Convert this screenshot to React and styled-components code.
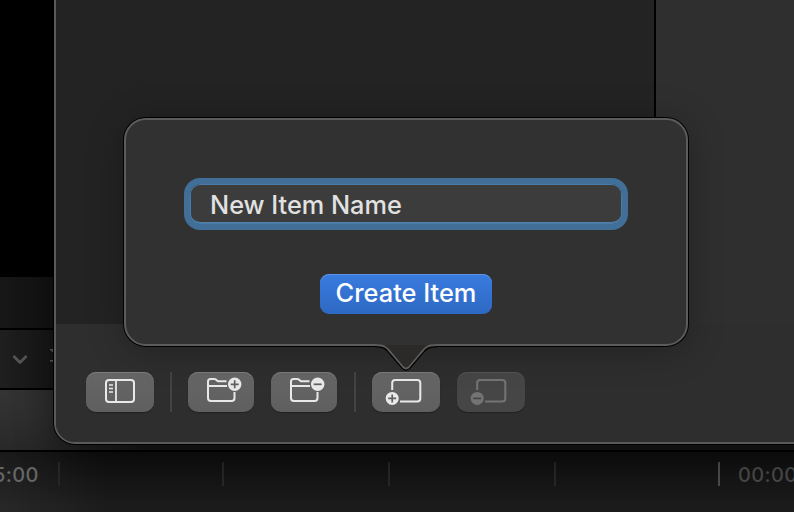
import React from "react";
import styled, { createGlobalStyle } from "styled-components";

const GlobalStyle = createGlobalStyle`
  *, *::before, *::after { box-sizing: border-box; }
  body { margin: 0; background: #000; }
`;

const Desktop = styled.main`
  position: relative;
  display: flex;
  flex-direction: column;
  width: 794px;
  height: 512px;
  overflow: hidden;
  background: #000;
  font-family: Inter, "Liberation Sans", sans-serif;
`;

const Viewer = styled.section`
  height: 277px;
  background: #000;
`;

const ViewerFooter = styled.div`
  height: 51px;
  background: linear-gradient(90deg, #171717, #111 54px);
`;

const TimelineHeader = styled.div`
  display: flex;
  align-items: center;
  gap: 21px;
  height: 62px;
  padding-left: 12px;
  border: solid #000;
  border-width: 2px 0;
  background: linear-gradient(90deg, #1f1f1f, #151515 54px);
`;

const TimelineBand = styled.div`
  height: 60px;
  background: radial-gradient(ellipse 160px 130px at 0 0, #343434, #2d2d2d 30%, #171717);
`;

const Ruler = styled.div`
  position: relative;
  height: 62px;
  border-top: 2px solid #000;
  background: linear-gradient(180deg, #0e0e0e, #1b1b1b 52px, #1c1c1c);

  &::before {
    content: "";
    position: absolute;
    inset: 0;
    background: linear-gradient(90deg, rgba(255, 255, 255, 0.05), transparent 110px);
  }
`;

const Tick = styled.span`
  position: absolute;
  left: ${(p) => p.$x}px;
  top: 10px;
  width: 2px;
  height: 24px;
  background: ${(p) => (p.$major ? "#4b4b4b" : "#272727")};
`;

const Timecode = styled.span`
  position: absolute;
  left: ${(p) => p.$x}px;
  top: 11px;
  color: ${(p) => p.$color};
  font-size: 20px;
  line-height: 24px;
  font-weight: 500;
  letter-spacing: 0.35px;
  white-space: nowrap;
`;

const Window = styled.section`
  position: absolute;
  left: 54px;
  top: -40px;
  display: flex;
  flex-direction: column;
  width: 800px;
  height: 484px;
  border: 2px solid #5a5a5a;
  border-radius: 21px;
  background: #2e2e2e;
  box-shadow: 0 0 0 1px #000, 0 12px 38px rgba(0, 0, 0, 0.35);
  overflow: hidden;
`;

const Panes = styled.div`
  display: flex;
  height: 362px;
`;

const ListPane = styled.div`
  width: 600px;
  background: #232323;
  border-right: 2px solid #000;
`;

const DetailPane = styled.div`
  flex: 1;
  background: #2f2f2f;
`;

const Toolbar = styled.div`
  display: flex;
  align-items: flex-start;
  flex: 1;
  padding: 48px 0 0 30px;
  background: #2e2e2e;
`;

const ToolButton = styled.button`
  display: flex;
  width: ${(p) => p.$w}px;
  height: 40px;
  margin: 0 ${(p) => p.$gap}px 0 0;
  padding: 0;
  border: 0;
  border-radius: 10px;
  background: ${(p) => (p.disabled ? "#464646" : "linear-gradient(#666, #5f5f5f)")};
  box-shadow:
    inset 0 1px 0 ${(p) => (p.disabled ? "#545454" : "#7c7c7c")},
    0 1px 1px rgba(0, 0, 0, 0.3);
  color: ${(p) => (p.disabled ? "#747474" : "#e9e9e9")};

  svg { display: block; }
`;

const Separator = styled.span`
  width: 2px;
  height: 40px;
  margin-right: 16px;
  background: #434343;
`;

const Popover = styled.form`
  position: absolute;
  left: 124px;
  top: 118px;
  display: flex;
  flex-direction: column;
  align-items: center;
  width: 564px;
  height: 228px;
  padding-top: 58px;
  border: 2px solid #5c5c5c;
  border-radius: 22px;
  background: #313131;
  box-shadow: 0 0 0 1px #000, 0 4px 36px rgba(0, 0, 0, 0.28);
`;

const Pointer = styled.svg`
  position: absolute;
  left: 246px;
  top: 222px;
`;

const NameField = styled.label`
  display: flex;
  align-items: center;
  width: 444px;
  height: 52px;
  padding-left: 20px;
  border: 6px solid #416f98;
  border-radius: 16px;
  background: #3c3c3c;
  box-shadow: inset 0 0 0 1px #487ba8, inset 0 -2px 0 #5080ab;
  color: #e1e1e1;
  font-size: 25.3px;
  font-weight: 450;
  line-height: 40px;
  white-space: nowrap;
`;

const FieldText = styled.span`
  margin-top: 1px;
`;

const CreateButton = styled.button`
  display: flex;
  align-items: center;
  justify-content: center;
  width: 172px;
  height: 40px;
  margin-top: 44px;
  padding: 0 0 2px;
  border: 0;
  border-radius: 9px;
  background: linear-gradient(#397bdf, #2e69c3);
  box-shadow: inset 0 1px 0 #5d94e6;
  color: #fff;
  font: 500 25.4px/38px Inter, "Liberation Sans", sans-serif;
  white-space: nowrap;
`;

const SidebarIcon = () => (
  <svg width="68" height="40" fill="none" stroke="currentColor">
    <rect x="20" y="8" width="28" height="22" rx="3" strokeWidth="2" />
    <path d="M30 8V30" strokeWidth="1.8" />
    <path d="M23 13H27M23 16.5H27M23 20H27" strokeWidth="1.5" />
  </svg>
);

const FolderIcon = ({ plus }) => (
  <svg width="66" height="40" fill="none" stroke="currentColor">
    <path
      d="M38.5 9.2H30L27.6 7.4Q27.2 7 26.4 7H22.5Q20 7 20 9.5V26Q20 29 23 29H43.5Q46.5 29 46.5 26V20M20 14H39"
      strokeWidth="2"
    />
    <circle cx="46.7" cy="12.3" r="6.7" fill="currentColor" stroke="none" />
    <path
      d={plus ? "M42.7 12.3H50.7M46.7 8.3V16.3" : "M42.7 12.3H50.7"}
      stroke="#606060"
      strokeWidth="1.7"
    />
  </svg>
);

const ItemIcon = ({ plus }) => (
  <svg width="68" height="40" fill="none" stroke="currentColor">
    <path
      d="M20.2 18V11Q20.2 8 23.2 8H45.3Q48.3 8 48.3 11V26.5Q48.3 29.5 45.3 29.5H28"
      strokeWidth="2"
    />
    <circle cx="20.2" cy="26.4" r="6.5" fill="currentColor" stroke="none" />
    <path
      d={plus ? "M16.2 26.4H24.2M20.2 22.4V30.4" : "M16.2 26.4H24.2"}
      stroke={plus ? "#606060" : "#464646"}
      strokeWidth="1.7"
    />
  </svg>
);

export default function App() {
  return (
    <>
      <GlobalStyle />
      <Desktop>
        <Viewer />
        <ViewerFooter />
        <TimelineHeader>
          <svg width="16" height="16" fill="none" stroke="#555" strokeWidth="2.8" strokeLinecap="round" strokeLinejoin="round">
            <path d="M2.2 5.8L8 11.5L13.8 5.8" />
          </svg>
          <svg width="16" height="20" fill="none" stroke="#5a5a5a" strokeWidth="1.4">
            <path d="M1 0.7H8M3.5 -2V3M1 11.7H8" />
          </svg>
        </TimelineHeader>
        <TimelineBand />
        <Ruler>
          <Timecode $x={-7} $color="#666">5:00</Timecode>
          <Tick $x={58} />
          <Tick $x={222} />
          <Tick $x={388} />
          <Tick $x={554} />
          <Tick $x={718} $major />
          <Timecode $x={738} $color="#484848">00:00</Timecode>
        </Ruler>

        <Window>
          <Panes>
            <ListPane />
            <DetailPane />
          </Panes>
          <Toolbar>
            <ToolButton $w={68} $gap={16}><SidebarIcon /></ToolButton>
            <Separator />
            <ToolButton $w={66} $gap={17}><FolderIcon plus /></ToolButton>
            <ToolButton $w={66} $gap={17}><FolderIcon /></ToolButton>
            <Separator />
            <ToolButton $w={68} $gap={17}><ItemIcon plus /></ToolButton>
            <ToolButton $w={68} $gap={0} disabled><ItemIcon /></ToolButton>
          </Toolbar>
        </Window>

        <Popover>
          <NameField>
            <FieldText>New Item Name</FieldText>
          </NameField>
          <CreateButton type="button">Create Item</CreateButton>
          <Pointer width="68" height="32" fill="none">
            <path d="M3 4V0H65V4Z" fill="#313131" />
            <path d="M3 3C14 3 15 6 20 12L31 25Q34 28 37 25L48 12C53 6 54 3 65 3Z" fill="#2b2a28" />
            <path d="M3 4.5C13 4.5 14 7.5 19 13L30.5 26.5Q34 29.5 37.5 26.5L49 13C54 7.5 55 4.5 65 4.5" stroke="#000" strokeWidth="1.4" />
            <path d="M3 3C14 3 15 6 20 12L31 25Q34 28 37 25L48 12C53 6 54 3 65 3" stroke="#5c5c5c" strokeWidth="1.8" />
          </Pointer>
        </Popover>
      </Desktop>
    </>
  );
}
